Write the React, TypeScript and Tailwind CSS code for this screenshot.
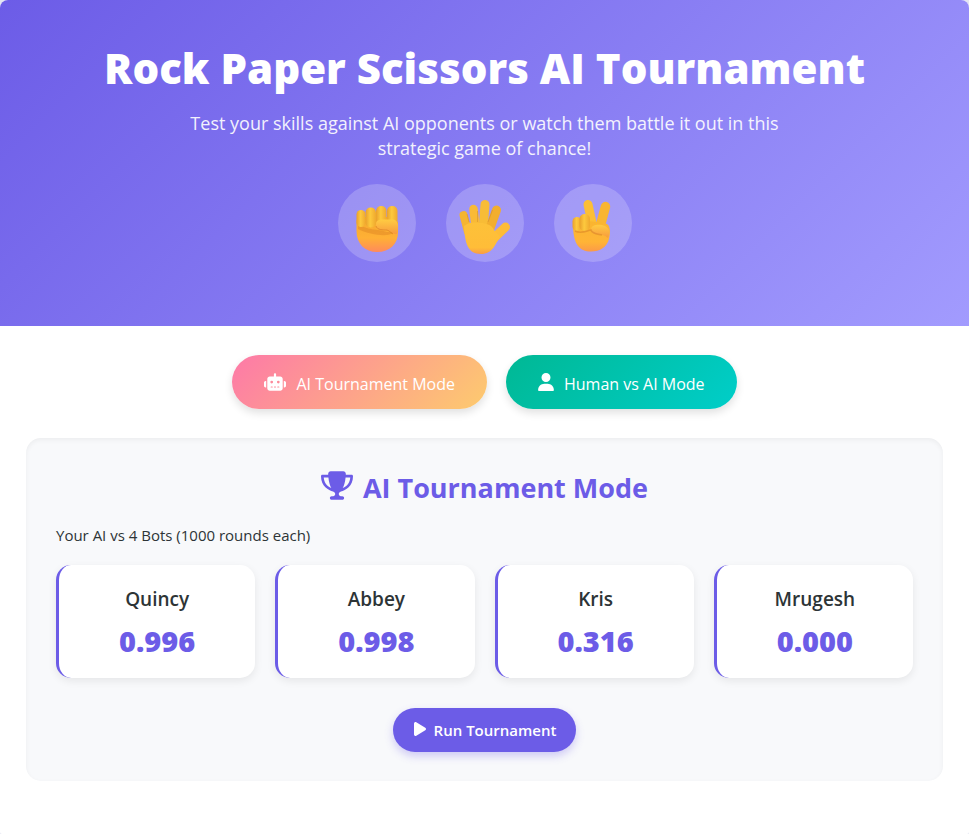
import type { ReactNode } from "react";
import { FaPlay, FaRobot, FaTrophy, FaUser } from "react-icons/fa6";

const bots = [
  { name: "Quincy", score: "0.996" },
  { name: "Abbey", score: "0.998" },
  { name: "Kris", score: "0.316" },
  { name: "Mrugesh", score: "0.000" },
];

function HandGradients() {
  return (
    <svg className="absolute h-0 w-0" aria-hidden="true">
      <defs>
        <linearGradient id="finger" x1="0" y1="0" x2="1" y2="0">
          <stop offset="0" stopColor="#e9a02c" />
          <stop offset="0.45" stopColor="#fdc93e" />
          <stop offset="1" stopColor="#efa92e" />
        </linearGradient>
        <linearGradient id="palm" x1="0" y1="0" x2="0" y2="1">
          <stop offset="0" stopColor="#f4a92e" />
          <stop offset="0.6" stopColor="#ffb035" />
          <stop offset="1" stopColor="#ff8a5c" />
        </linearGradient>
        <linearGradient id="victory-palm" x1="0" y1="0" x2="0" y2="1">
          <stop offset="0" stopColor="#f9b52f" />
          <stop offset="0.7" stopColor="#ffb436" />
          <stop offset="1" stopColor="#fb9a48" />
        </linearGradient>
        <linearGradient id="open-palm" x1="0" y1="0" x2="0" y2="1">
          <stop offset="0" stopColor="#fdc139" />
          <stop offset="0.8" stopColor="#ffbd38" />
          <stop offset="1" stopColor="#f99c45" />
        </linearGradient>
        <linearGradient id="thumb" x1="0" y1="0" x2="0" y2="1">
          <stop offset="0" stopColor="#ffcb42" />
          <stop offset="1" stopColor="#f79a3e" />
        </linearGradient>
      </defs>
    </svg>
  );
}

function Fist() {
  return (
    <svg viewBox="0 0 78 78" className="size-full" role="img" aria-label="Rock">
      <path d="M18.500 36V47C18.500 60 27 68 39 68C52 68 60 60 60 48V38L50 33H24Z" fill="url(#palm)" />
      <path d="M20 40C28 46 40 45 49 48L57 48C52 53 34 52 20 45Z" fill="#d97e20" opacity="0.4" />
      <rect x="49" y="22" width="10.500" height="21" rx="5" fill="url(#finger)" />
      <rect x="38" y="22" width="10.500" height="21" rx="5" fill="url(#finger)" />
      <rect x="27.500" y="23.500" width="10.500" height="20" rx="5" fill="url(#finger)" />
      <rect x="18.500" y="26" width="9" height="17" rx="4.500" fill="url(#finger)" />
      <path d="M38 40C38 36.500 41 35.500 45 35.500H54C61 35.500 61 43 59 50C55 51 53 46 49 46H44C40 46 38 44 38 40Z" fill="url(#thumb)" />
      <path d="M38 42C39 46 45 46 49 46C52 47 53 49 55 50" fill="none" stroke="#d67a22" strokeWidth="1" opacity="0.6" />
    </svg>
  );
}

function OpenHand() {
  return (
    <svg viewBox="0 0 78 78" className="size-full" role="img" aria-label="Paper">
      <g strokeLinecap="round" fill="none">
        <path d="M17.500 31L22 48" strokeWidth="8" stroke="#f5b531" />
        <path d="M27.500 25L30 46" strokeWidth="8.500" stroke="#f9ba36" />
        <path d="M39 20.500L37 46" strokeWidth="9" stroke="#f8bc36" />
        <path d="M50.500 26L43 47" strokeWidth="9" stroke="#f2ae2e" />
        <path d="M59.500 43L46 56" strokeWidth="9" stroke="#fdbc37" />
      </g>
      <path d="M18 42C23 38 28 38 34 39C40 39 46 41 48 46C50 49 52 50 54 53C49 60 47 70 35 70C21 70 19 58 18 42Z" fill="url(#open-palm)" />
      <path d="M42 38L46.500 26M31.500 38L31.500 27M23 38L21 30" stroke="#d18a2a" strokeWidth="1" opacity="0.5" fill="none" />
    </svg>
  );
}

function Victory() {
  return (
    <svg viewBox="0 0 78 78" className="size-full" role="img" aria-label="Scissors">
      <path d="M34 20.500L39 43" stroke="#fcbf36" strokeWidth="9" strokeLinecap="round" />
      <path d="M51.500 22.500L46 43" stroke="#f9b532" strokeWidth="9.500" strokeLinecap="round" />
      <path d="M19 40L24 36L43 38L53 40C57 43 56 50 55 55C53 63 46 67.500 37 67.500C25 67.500 19 60 19 40Z" fill="url(#victory-palm)" />
      <rect x="18.500" y="33" width="9" height="14" rx="4.500" fill="url(#finger)" />
      <rect x="25.500" y="30" width="10.500" height="17" rx="5" fill="url(#finger)" />
      <path d="M37 45C38 40 46 40 51 42C56 44 56 50 54 54C50 51 48 50 43 50C39 50 37 48 37 45Z" fill="url(#thumb)" />
      <path d="M21 47C27 50 32 47 37 46C38 50 44 50 48 51" stroke="#d98227" strokeWidth="1.500" opacity="0.55" fill="none" />
    </svg>
  );
}

function HandCircle({ children }: { children: ReactNode }) {
  return <div className="size-[78px] rounded-full bg-white/20">{children}</div>;
}

export default function App() {
  return (
    <div className="min-h-screen bg-[#e4e5f2] font-['Open_Sans','Noto_Sans',sans-serif] text-[#2d3436]">
      <div className="min-h-screen overflow-hidden rounded-t-lg rounded-b-xs bg-white">
        <header className="flex flex-col items-center bg-[linear-gradient(135deg,#6c5ce7,#a29bfe)] px-5 pt-10 pb-16 text-center text-white">
          <HandGradients />
          <h1 className="text-[42px] leading-[56px] font-extrabold">Rock Paper Scissors AI Tournament</h1>
          <p className="mt-[15px] max-w-[600px] text-[18px] leading-[25px] opacity-90">
            Test your skills against AI opponents or watch them battle it out in this strategic game of chance!
          </p>
          <div className="mt-[23px] flex gap-[30px]">
            <HandCircle><Fist /></HandCircle>
            <HandCircle><OpenHand /></HandCircle>
            <HandCircle><Victory /></HandCircle>
          </div>
        </header>

        <main className="px-[26px] pt-[29px] pb-[53px]">
          <nav className="flex flex-wrap justify-center gap-[19px]" aria-label="Game mode">
            <button className="flex h-[54px] items-center gap-[10px] rounded-full bg-[linear-gradient(135deg,#fd79a8,#fdcb6e)] px-8 text-[16px] text-white shadow-[0_4px_8px_rgba(0,0,0,0.12)]">
              <FaRobot className="h-[18px] w-[22px]" />
              <span className="pt-1">AI Tournament Mode</span>
            </button>
            <button className="flex h-[54px] items-center gap-[10px] rounded-full bg-[linear-gradient(135deg,#00b894,#00cec9)] px-8 text-[16px] text-white shadow-[0_4px_8px_rgba(0,0,0,0.12)]">
              <FaUser className="h-[18px] w-[16px]" />
              <span className="pt-1">Human vs AI Mode</span>
            </button>
          </nav>

          <section className="mt-[29px] rounded-[15px] bg-[#f8f9fb] px-[30px] pt-[30px] pb-[29px] shadow-[inset_0_2px_5px_rgba(0,0,0,0.05)]">
            <h2 className="flex items-center justify-center gap-[10px] text-[27px] leading-[40px] font-bold text-[#6c5ce7]">
              <FaTrophy className="mb-[6px] h-[29px] w-[32px]" />
              AI Tournament Mode
            </h2>
            <p className="mt-[15px] text-[15px] leading-[24px]">Your AI vs 4 Bots (1000 rounds each)</p>
            <div className="mt-[18px] grid grid-cols-4 gap-5">
              {bots.map((bot) => (
                <article
                  key={bot.name}
                  className="rounded-[15px] border-l-3 border-[#6c5ce7] bg-white pt-5 pb-[18px] text-center shadow-[0_3px_8px_rgba(0,0,0,0.08)]"
                >
                  <h3 className="text-[19px] leading-[28px] font-semibold">{bot.name}</h3>
                  <p className="mt-[9px] text-[29px] leading-[38px] font-extrabold text-[#6c5ce7]">{bot.score}</p>
                </article>
              ))}
            </div>
            <div className="mt-[30px] flex justify-center">
              <button className="flex h-[44px] items-center gap-[7px] rounded-full bg-[#6c5ce7] px-5 text-[15px] font-semibold text-white shadow-[0_4px_8px_rgba(108,92,231,0.3)]">
                <FaPlay className="mb-[2px] h-[16px] w-[14px]" />
                Run Tournament
              </button>
            </div>
          </section>
        </main>
      </div>
    </div>
  );
}
